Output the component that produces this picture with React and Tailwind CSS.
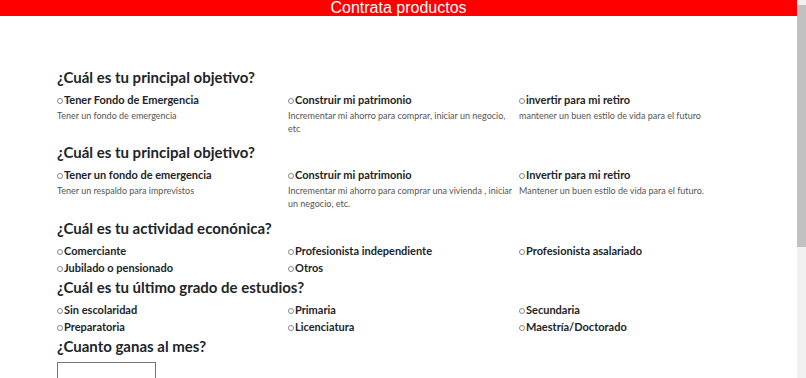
const objectiveSets = [
  [
    {
      label: "Tener Fondo de Emergencia",
      desc: ["Tener un fondo de emergencia"],
    },
    {
      label: "Construir mi patrimonio",
      desc: ["Incrementar mi ahorro para comprar, iniciar un negocio,", "etc"],
    },
    {
      label: "invertir para mi retiro",
      desc: ["mantener un buen estilo de vida para el futuro"],
    },
  ],
  [
    {
      label: "Tener un fondo de emergencia",
      desc: ["Tener un respaldo para imprevistos"],
    },
    {
      label: "Construir mi patrimonio",
      desc: [
        "Incrementar mi ahorro para comprar una vivienda , iniciar",
        "un negocio, etc.",
      ],
    },
    {
      label: "Invertir para mi retiro",
      desc: ["Mantener un buen estilo de vida para el futuro."],
    },
  ],
];

const activities = [
  "Comerciante",
  "Profesionista independiente",
  "Profesionista asalariado",
  "Jubilado o pensionado",
  "Otros",
];

const studies = [
  "Sin escolaridad",
  "Primaria",
  "Secundaria",
  "Preparatoria",
  "Licenciatura",
  "Maestría/Doctorado",
];

function Radio() {
  return (
    <span className="mr-[1px] inline-block h-[6px] w-[6px] shrink-0 rounded-full border border-[#888]" />
  );
}

function Question({ children }) {
  return (
    <h2 className="h-[24px] text-[15px] font-bold leading-[24px] text-[#212529]">
      {children}
    </h2>
  );
}

function OptionLabel({ children }) {
  return (
    <div className="flex h-[17px] items-center text-[11px] font-bold text-[#212529]">
      <Radio />
      <span>{children}</span>
    </div>
  );
}

export default function App() {
  return (
    <div className="flex h-screen w-full overflow-hidden bg-white font-['Lato',sans-serif]">
      <div className="flex-1 overflow-hidden">
        <header className="h-[16px] bg-[#ff0000] text-center font-['Liberation_Sans',Arial,sans-serif] text-[16px] leading-[15px] text-white">
          Contrata productos
        </header>

        <main className="pl-[57px] pt-[49px]">
          {objectiveSets.map((set, index) => (
            <section
              key={index}
              className={index === 0 ? "mb-[5px]" : "mb-[6px]"}
            >
              <Question>¿Cuál es tu principal objetivo?</Question>
              <div className="mt-[3px] grid grid-cols-[231px_231px_231px]">
                {set.map((item) => (
                  <div key={item.label}>
                    <OptionLabel>{item.label}</OptionLabel>
                    {item.desc.map((line) => (
                      <p
                        key={line}
                        className="whitespace-nowrap text-[9px] leading-[13px] text-[#555]"
                      >
                        {line}
                      </p>
                    ))}
                  </div>
                ))}
              </div>
            </section>
          ))}

          <section className="-mb-[2px]">
            <Question>¿Cuál es tu actividad econónica?</Question>
            <div className="mt-[3px] grid grid-cols-[231px_231px_231px]">
              {activities.map((item) => (
                <OptionLabel key={item}>{item}</OptionLabel>
              ))}
            </div>
          </section>

          <section className="-mb-[2px]">
            <Question>¿Cuál es tu último grado de estudios?</Question>
            <div className="mt-[3px] grid grid-cols-[231px_231px_231px]">
              {studies.map((item) => (
                <OptionLabel key={item}>{item}</OptionLabel>
              ))}
            </div>
          </section>

          <section>
            <Question>¿Cuanto ganas al mes?</Question>
            <input
              type="text"
              className="mt-[1px] h-[17px] w-[99px] border border-[#767676] bg-white"
            />
          </section>
        </main>
      </div>

      <div className="w-[9px] shrink-0 bg-[#f1f1f1] pt-[5px]">
        <div className="h-[242px] w-full bg-[#c1c1c1]" />
      </div>
    </div>
  );
}
